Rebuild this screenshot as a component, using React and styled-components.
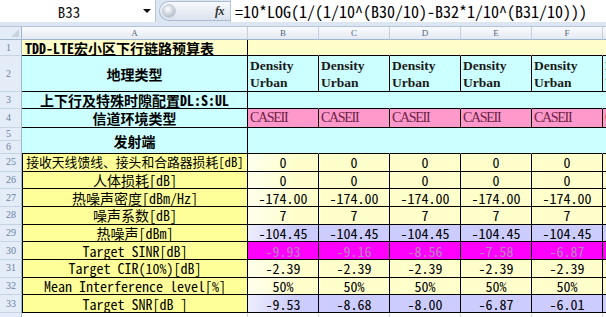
import React from "react";
import styled, { createGlobalStyle } from "styled-components";

const MONO_CJK = `"Noto Sans Mono CJK SC", "Liberation Mono", "Noto Sans CJK SC", monospace`;

const GlobalStyle = createGlobalStyle`
  html, body {
    margin: 0;
    padding: 0;
    background: #fff;
    overflow: hidden;
  }
  * { box-sizing: border-box; }
`;

const Screen = styled.div`
  width: 606px;
  height: 317px;
  overflow: hidden;
  display: flex;
  flex-direction: column;
`;

/* formula bar */
const FormulaBar = styled.div`
  display: flex;
  height: 27px;
  flex: none;
  background: #dce6f3;
  padding-bottom: 4px;
  border-bottom: 1px solid #b3c4da;
`;

const NameBox = styled.div`
  width: 156px;
  display: grid;
  grid-template-columns: 138px 18px;
  align-items: center;
  background: #fff;
  border-right: 1px solid #b8c8dc;
  font: 15px/1 ${MONO_CJK};
  color: #111;
  span { text-align: center; }
`;

const DropArrow = styled.i`
  width: 0;
  height: 0;
  border-left: 4px solid transparent;
  border-right: 4px solid transparent;
  border-top: 4px solid #111;
  justify-self: center;
`;

const FxBox = styled.div`
  width: 74px;
  display: flex;
  align-items: center;
  padding-left: 3px;
`;

const Pill = styled.div`
  flex: 1;
  height: 20px;
  display: flex;
  align-items: center;
  justify-content: space-between;
  padding: 0 6px 0 2px;
  border: 1px solid #aabbd2;
  border-right: none;
  border-radius: 10px 0 0 10px;
  background: linear-gradient(#f7f9fc, #dbe3ee);
`;

const Knob = styled.i`
  width: 14px;
  height: 14px;
  border-radius: 50%;
  background: radial-gradient(circle at 40% 35%, #ffffff, #b9c3cf 70%);
  border: 1px solid #c6ced8;
`;

const Fx = styled.span`
  font: italic bold 12px "Liberation Serif", serif;
  color: #333;
  letter-spacing: -0.5px;
`;

const FormulaText = styled.div`
  flex: 1;
  display: flex;
  align-items: center;
  padding-left: 4px;
  background: #fff;
  border-left: 1px solid #b8c8dc;
  font: 16px/1 ${MONO_CJK};
  color: #000;
  white-space: nowrap;
  overflow: hidden;
`;

/* sheet */
const Sheet = styled.div`
  display: grid;
  grid-template-columns: 22px 226px repeat(6, 71px);
  grid-template-rows: 13px 16px 36px 17px 19px 13px 13px repeat(9, 17.67px) 20px;
`;

const Corner = styled.div`
  position: relative;
  background: #e4ecf7;
  border-right: 1px solid #9eb6ce;
  border-bottom: 1px solid #9eb6ce;
  &::after {
    content: "";
    position: absolute;
    right: 2px;
    bottom: 2px;
    border-left: 8px solid transparent;
    border-bottom: 8px solid #c9d3df;
  }
`;

const ColHead = styled.div`
  display: flex;
  align-items: center;
  justify-content: center;
  background: linear-gradient(#f9fbfd, #e4eaf3);
  border-right: 1px solid #c3cfdf;
  border-bottom: 1px solid #9eb6ce;
  font: 9px/1 "Liberation Serif", serif;
  color: #55657c;
`;

const RowHead = styled.div`
  display: flex;
  align-items: center;
  padding-left: 6px;
  background: #e4ecf7;
  border-right: 1px solid #9eb6ce;
  border-bottom: 1px solid #c5d3e3;
  font: 10px/1 "Liberation Serif", serif;
  color: #6b82a3;
`;

const Cell = styled.div`
  display: flex;
  align-items: center;
  justify-content: ${(p) => p.$align || "center"};
  overflow: hidden;
  white-space: nowrap;
  line-height: 1;
  background: ${(p) => p.$bg || "#fff"};
  border-right: 1px solid ${(p) => p.$vline || "transparent"};
  border-bottom: 1px solid ${(p) => p.$hline || "transparent"};
`;

const TitleCell = styled(Cell)`
  padding-left: 3px;
  font: bold 14px/1 ${MONO_CJK};
  color: #000;
`;

const HeadLabel = styled(Cell)`
  grid-row: span ${(p) => p.$span || 1};
  font: bold 14px/1 ${MONO_CJK};
  color: #000;
`;

const ScenarioCell = styled(Cell)`
  padding-left: 2px;
  font: bold 13.5px/17px "Liberation Serif", serif;
  color: #1a1a1a;
`;

const CaseCell = styled(Cell)`
  padding-left: 2px;
  font: 14px/1 "Liberation Serif", serif;
  letter-spacing: -1.3px;
  color: #6e1f45;
`;

const ParamCell = styled(Cell)`
  border-left: 1px solid #000;
  font: ${(p) => p.$size || 14}px/1 ${MONO_CJK};
  color: #000;
`;

const ValueCell = styled(Cell)`
  font: 14px/1 ${MONO_CJK};
  color: ${(p) => p.$ink || "#000"};
  background: ${(p) =>
    p.$fade ? `linear-gradient(to right, #ffffff -40%, ${p.$bg} 70%)` : p.$bg};
`;

const LIGHT_YELLOW = "#ffffcc";
const YELLOW = "#ffff99";
const CYAN = "#ccffff";
const PINK = "#ff99cc";
const LAVENDER = "#ccccff";
const MAGENTA = "#ff00ff";
const GRID = "#d0d7e5";
const columns = ["A", "B", "C", "D", "E", "F", "G"];
const dataCols = [0, 1, 2, 3, 4, 5];

const params = [
  { n: 25, label: "接收天线馈线、接头和合路器损耗[dB]", size: 12.8, values: ["0", "0", "0", "0", "0"], bg: LIGHT_YELLOW },
  { n: 26, label: "人体损耗[dB]", values: ["0", "0", "0", "0", "0"], bg: LIGHT_YELLOW },
  { n: 27, label: "热噪声密度[dBm/Hz]", values: ["-174.00", "-174.00", "-174.00", "-174.00", "-174.00"], bg: LIGHT_YELLOW },
  { n: 28, label: "噪声系数[dB]", values: ["7", "7", "7", "7", "7"], bg: LIGHT_YELLOW },
  { n: 29, label: "热噪声[dBm]", values: ["-104.45", "-104.45", "-104.45", "-104.45", "-104.45"], bg: LAVENDER },
  { n: 30, label: "Target SINR[dB]", values: ["-9.93", "-9.16", "-8.56", "-7.58", "-6.87"], bg: MAGENTA, ink: "#b884b8" },
  { n: 31, label: "Target CIR(10%)[dB]", values: ["-2.39", "-2.39", "-2.39", "-2.39", "-2.39"], bg: LIGHT_YELLOW },
  { n: 32, label: "Mean Interference level[%]", values: ["50%", "50%", "50%", "50%", "50%"], bg: LIGHT_YELLOW },
  { n: 33, label: "Target SNR[dB  ]", values: ["-9.53", "-8.68", "-8.00", "-6.87", "-6.01"], bg: LAVENDER },
];

const App = () => {
  return (
    <Screen>
      <GlobalStyle />
      <FormulaBar>
        <NameBox>
          <span>B33</span>
          <DropArrow />
        </NameBox>
        <FxBox>
          <Pill>
            <Knob />
            <Fx>fx</Fx>
          </Pill>
        </FxBox>
        <FormulaText>=10*LOG(1/(1/10^(B30/10)-B32*1/10^(B31/10)))</FormulaText>
      </FormulaBar>

      <Sheet>
        <Corner />
        {columns.map((c) => (
          <ColHead key={c}>{c}</ColHead>
        ))}

        <RowHead>1</RowHead>
        <TitleCell $align="flex-start" $bg={LIGHT_YELLOW} $vline="#000" $hline="#000">
          TDD-LTE宏小区下行链路预算表
        </TitleCell>
        {dataCols.map((i) => (
          <Cell key={`r1-${i}`} $bg={LIGHT_YELLOW} $hline="#000" />
        ))}

        <RowHead>2</RowHead>
        <HeadLabel $bg={CYAN} $vline="#000" $hline="#000">地理类型</HeadLabel>
        {dataCols.map((i) => (
          <ScenarioCell key={`r2-${i}`} $align="flex-start" $bg={CYAN} $vline="#000" $hline="#000">
            Density
            <br />
            Urban
          </ScenarioCell>
        ))}

        <RowHead>3</RowHead>
        <HeadLabel $bg={CYAN} $vline="#000" $hline="#000">上下行及特殊时隙配置DL:S:UL</HeadLabel>
        {dataCols.map((i) => (
          <Cell key={`r3-${i}`} $bg={CYAN} $hline="#000" />
        ))}

        <RowHead>4</RowHead>
        <HeadLabel $bg={CYAN} $vline="#000" $hline="#000">信道环境类型</HeadLabel>
        {dataCols.map((i) => (
          <CaseCell key={`r4-${i}`} $align="flex-start" $bg={PINK} $vline="#000" $hline="#000">
            CASEII
          </CaseCell>
        ))}

        <RowHead>5</RowHead>
        <HeadLabel $span={2} $bg={CYAN} $vline="#000" $hline="#000">发射端</HeadLabel>
        {dataCols.map((i) => (
          <Cell key={`r5-${i}`} $bg={CYAN} />
        ))}
        <RowHead>6</RowHead>
        {dataCols.map((i) => (
          <Cell key={`r6-${i}`} $bg={CYAN} $hline="#000" />
        ))}

        {params.map((row) => (
          <React.Fragment key={row.n}>
            <RowHead>{row.n}</RowHead>
            <ParamCell $size={row.size} $bg={YELLOW} $vline="#000" $hline="#000">
              {row.label}
            </ParamCell>
            {dataCols.map((i) => (
              <ValueCell
                key={`${row.n}-${i}`}
                $bg={row.bg}
                $ink={row.ink}
                $fade={i === 0 && row.bg !== MAGENTA}
                $vline="#000"
                $hline="#000"
              >
                {row.values[i] || ""}
              </ValueCell>
            ))}
          </React.Fragment>
        ))}

        <RowHead>34</RowHead>
        {columns.map((c) => (
          <Cell key={`r34-${c}`} $vline={GRID} $hline={GRID} />
        ))}
      </Sheet>
    </Screen>
  );
};

export default App;
